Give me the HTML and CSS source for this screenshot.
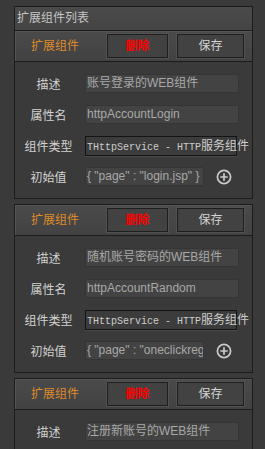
FILE: index.html
```html
<!DOCTYPE html>
<html lang="zh-CN">
<head>
    <meta charset="UTF-8">
    <title>扩展组件列表</title>
    <link rel="stylesheet" href="styles.css">
</head>
<body>
    <div class="panel">
        <div class="panel-title">扩展组件列表</div>

        <div class="comp">
            <div class="comp-head">
                <span class="comp-name">扩展组件</span>
                <button class="btn btn-del">删除</button>
                <button class="btn btn-save">保存</button>
            </div>
            <div class="comp-body">
                <div class="field"><label>描述</label><div class="input">账号登录的WEB组件</div></div>
                <div class="field"><label>属性名</label><div class="input">httpAccountLogin</div></div>
                <div class="field"><label>组件类型</label><div class="select"><span class="mono">THttpService - HTTP</span>服务组件</div></div>
                <div class="field">
                    <label>初始值</label>
                    <div class="input input-short">{ "page" : "login.jsp" }</div>
                    <svg class="add" viewBox="0 0 16 16"><circle cx="8" cy="8" r="6.6"/><path d="M4.3 8h7.4M8 4.3v7.4"/></svg>
                </div>
            </div>
        </div>

        <div class="comp">
            <div class="comp-head">
                <span class="comp-name">扩展组件</span>
                <button class="btn btn-del">删除</button>
                <button class="btn btn-save">保存</button>
            </div>
            <div class="comp-body">
                <div class="field"><label>描述</label><div class="input">随机账号密码的WEB组件</div></div>
                <div class="field"><label>属性名</label><div class="input">httpAccountRandom</div></div>
                <div class="field"><label>组件类型</label><div class="select"><span class="mono">THttpService - HTTP</span>服务组件</div></div>
                <div class="field">
                    <label>初始值</label>
                    <div class="input input-short">{ "page" : "oneclickreg</div>
                    <svg class="add" viewBox="0 0 16 16"><circle cx="8" cy="8" r="6.6"/><path d="M4.3 8h7.4M8 4.3v7.4"/></svg>
                </div>
            </div>
        </div>

        <div class="comp">
            <div class="comp-head">
                <span class="comp-name">扩展组件</span>
                <button class="btn btn-del">删除</button>
                <button class="btn btn-save">保存</button>
            </div>
            <div class="comp-body">
                <div class="field"><label>描述</label><div class="input">注册新账号的WEB组件</div></div>
            </div>
        </div>
    </div>
</body>
</html>
```

FILE: styles.css
```css
:root {
    --bg: #3a3a3a;
    --line: #1c1c1c;
    --orange: #de8a2a;
}

* {
    box-sizing: border-box;
    margin: 0;
    padding: 0;
}

html {
    overflow: hidden;
}

body {
    background: var(--bg);
    font-family: "Liberation Sans", "Noto Sans CJK SC", sans-serif;
    font-size: 12px;
    color: #d0d0d0;
    padding: 6px 0 0 14px;
}

.panel {
    width: 239px;
}

.panel-title {
    height: 24px;
    line-height: 23px;
    padding-left: 2px;
    border: 1px solid var(--line);
    border-bottom: none;
    background: linear-gradient(#4a4a4a, #444);
    color: #c4c4c4;
}

.comp {
    margin-bottom: 5px;
}

.comp-head {
    display: flex;
    align-items: center;
    gap: 9px;
    height: 32px;
    padding: 0 8px 0 16px;
    border: 1px solid var(--line);
    background: linear-gradient(#4a4a4a, #424242);
    box-shadow: inset 1px 1px 0 #555;
}

.comp-name {
    color: var(--orange);
    margin-right: auto;
    line-height: 16px;
}

.btn {
    height: 24px;
    font-family: inherit;
    font-size: 12px;
    line-height: 20px;
    background: #424242;
    border: 1px solid #1e1e1e;
    box-shadow: 0 0 0 1px #525252;
    color: #d4d4d4;
}

.btn-del {
    width: 61px;
    color: #ff0000;
    font-weight: bold;
}

.btn-save {
    width: 67px;
}

.comp-body {
    display: flex;
    flex-direction: column;
    gap: 12px;
    padding: 12px 0;
    border: 1px solid var(--line);
    border-top: none;
}

.field {
    display: flex;
    align-items: center;
    height: 19px;
}

.field label {
    width: 67px;
    margin-right: 3px;
    text-align: center;
    color: #d2d2d2;
    white-space: nowrap;
}

.input {
    width: 154px;
    height: 19px;
    line-height: 17px;
    padding-left: 1px;
    background: #434343;
    border: 1px solid #353535;
    color: #a8a8a8;
    white-space: nowrap;
    overflow: hidden;
}

.input-short {
    width: 119px;
}

.select {
    width: 152px;
    height: 20px;
    line-height: 18px;
    padding-left: 1px;
    background: #3c3c3c;
    border: 1px solid #141414;
    box-shadow: 0 1px 0 #4a4a4a;
    color: #cdcdcd;
    white-space: nowrap;
}

.mono {
    font-family: "Liberation Mono", monospace;
    font-size: 10px;
}

.add {
    width: 16px;
    height: 16px;
    margin-left: 12px;
    fill: none;
    stroke: #cacaca;
    stroke-width: 1.7;
}
```
